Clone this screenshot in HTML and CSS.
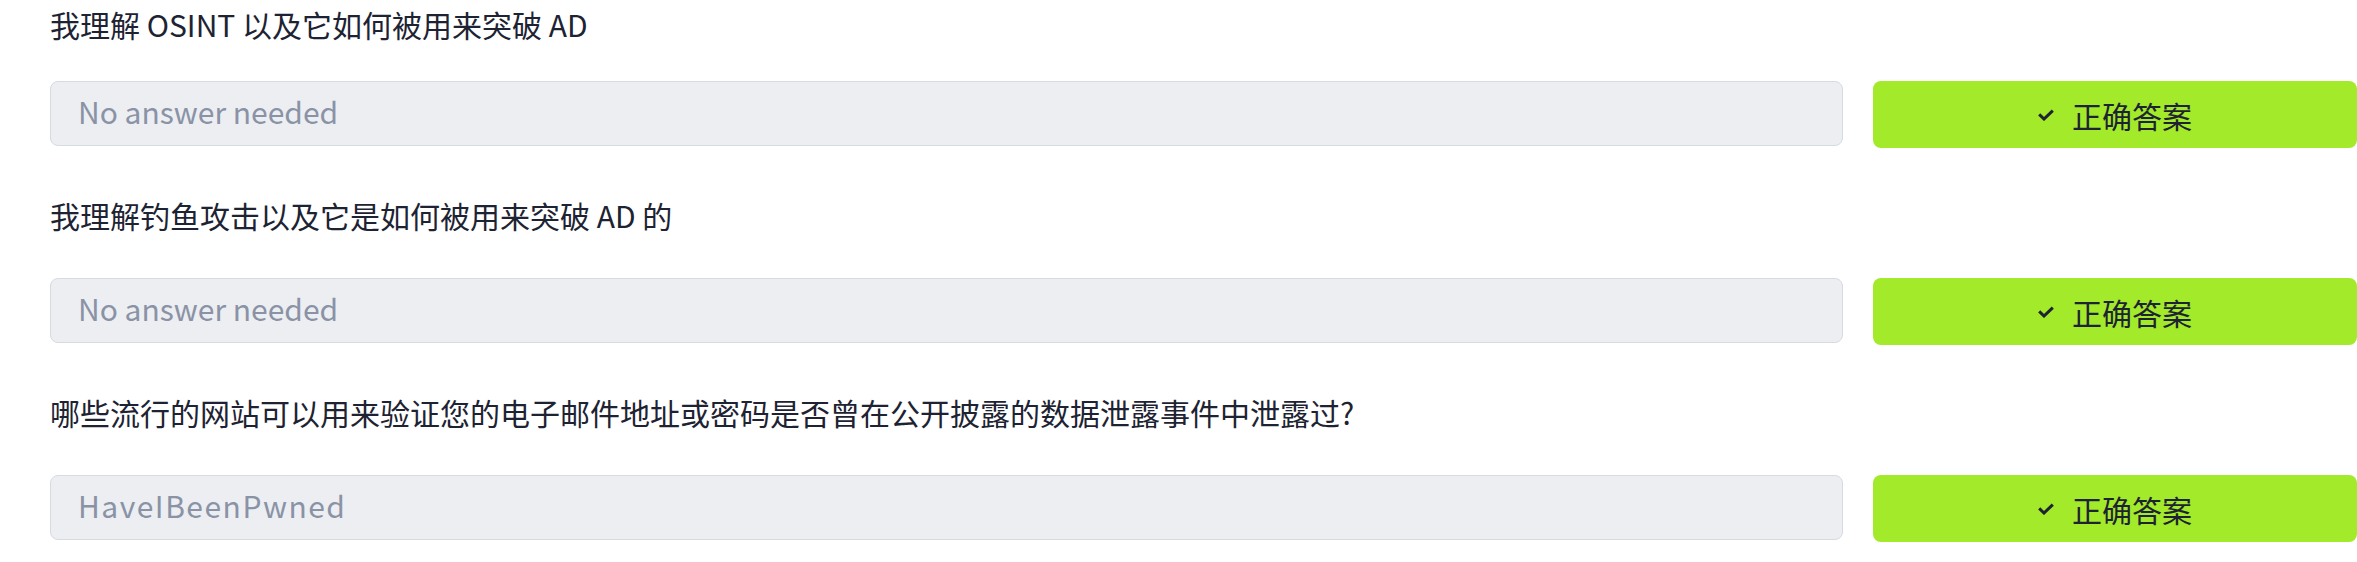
FILE: index.html
```html
<!DOCTYPE html>
<html lang="zh-CN">
<head>
<meta charset="utf-8">
<title>Questions</title>
<link rel="stylesheet" href="styles.css">
</head>
<body>
<main class="page">
  <section class="question question--first">
    <p class="q-label">我理解 OSINT 以及它如何被用来突破 AD</p>
    <div class="answer-row">
      <input class="answer-input" type="text" placeholder="No answer needed" readonly>
      <button class="answer-btn" type="button">
        <svg class="check-icon" width="16" height="12" viewBox="0 0 16 12" aria-hidden="true"><polyline points="1.2,5.4 6,10 14.8,1.6" fill="none" stroke="#1d2332" stroke-width="3" stroke-linecap="butt" stroke-linejoin="miter"/></svg>
        <span>正确答案</span>
      </button>
    </div>
  </section>
  <section class="question">
    <p class="q-label">我理解钓鱼攻击以及它是如何被用来突破 AD 的</p>
    <div class="answer-row">
      <input class="answer-input" type="text" placeholder="No answer needed" readonly>
      <button class="answer-btn" type="button">
        <svg class="check-icon" width="16" height="12" viewBox="0 0 16 12" aria-hidden="true"><polyline points="1.2,5.4 6,10 14.8,1.6" fill="none" stroke="#1d2332" stroke-width="3" stroke-linecap="butt" stroke-linejoin="miter"/></svg>
        <span>正确答案</span>
      </button>
    </div>
  </section>
  <section class="question">
    <p class="q-label">哪些流行的网站可以用来验证您的电子邮件地址或密码是否曾在公开披露的数据泄露事件中泄露过?</p>
    <div class="answer-row">
      <input class="answer-input answer-input--value" type="text" value="HaveIBeenPwned" readonly>
      <button class="answer-btn" type="button">
        <svg class="check-icon" width="16" height="12" viewBox="0 0 16 12" aria-hidden="true"><polyline points="1.2,5.4 6,10 14.8,1.6" fill="none" stroke="#1d2332" stroke-width="3" stroke-linecap="butt" stroke-linejoin="miter"/></svg>
        <span>正确答案</span>
      </button>
    </div>
  </section>
</main>
</body>
</html>
```

FILE: styles.css
```css
html, body {
  margin: 0;
  padding: 0;
  background: #ffffff;
}

body {
  font-family: "Noto Sans CJK SC", "Noto Sans", sans-serif;
  color: #1d2332;
  overflow: hidden;
}

.page {
  padding: 2px 0 0 50px;
}

.question + .question {
  margin-top: 45px;
}

.q-label {
  margin: 0 0 40px;
  font-size: 30px;
  line-height: 45px;
  color: #1d2332;
  white-space: nowrap;
}

.question--first .q-label {
  margin-bottom: 34px;
}

.answer-row {
  display: flex;
  align-items: flex-start;
  gap: 30px;
}

.answer-input {
  flex: 1 1 auto;
  min-width: 0;
  box-sizing: border-box;
  height: 65px;
  margin: 0;
  padding: 0 27px 6px 27px;
  border: 1px solid #d6dae1;
  border-radius: 8px;
  background: #eceef2;
  font-family: "Noto Sans CJK SC", "Noto Sans", sans-serif;
  font-size: 30px;
  line-height: 43px;
  color: #8a93a6;
  outline: none;
}

.answer-input--value {
  letter-spacing: 1.5px;
}

.answer-input::placeholder {
  color: #8a93a6;
  opacity: 1;
}

.answer-btn {
  flex: 0 0 484px;
  box-sizing: border-box;
  height: 67px;
  margin: 0;
  padding: 0;
  border: 0;
  border-radius: 8px;
  background: #a3ea2a;
  display: flex;
  align-items: center;
  justify-content: center;
  gap: 18px;
  font-family: "Noto Sans CJK SC", "Noto Sans", sans-serif;
  font-size: 30px;
  color: #1d2332;
  cursor: pointer;
}

.check-icon {
  display: block;
  flex: none;
}
```
